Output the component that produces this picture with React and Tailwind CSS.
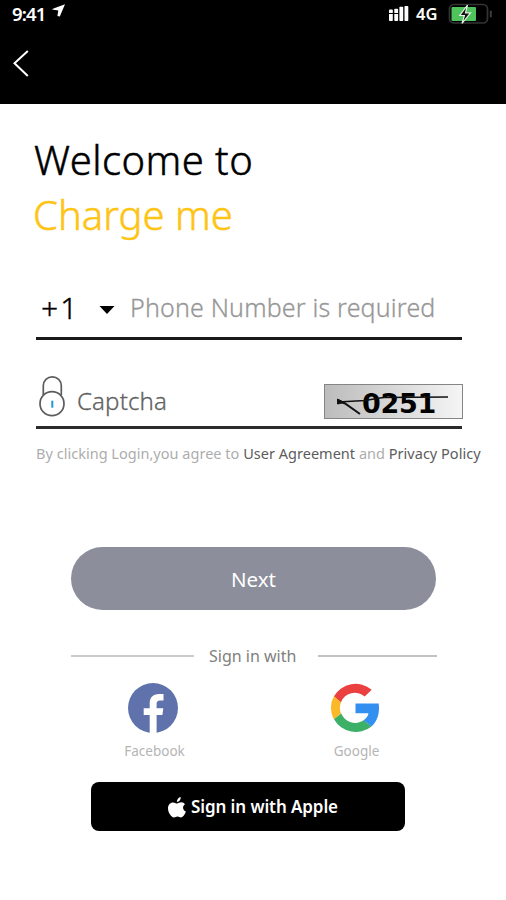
import { useState } from "react";

const SIGNAL_BARS = [
    { x: 0, top: 3.5 },
    { x: 5.3, top: 2.7 },
    { x: 10.4, top: 0.8 },
    { x: 15.5, top: 0 },
];

/**
 * StatusBar Component
 * Clock, signal strength and battery
 */
const StatusBar = () => (
    <div className="flex h-7 items-center justify-between pl-3 pr-[13px] text-white">
        <div className="flex items-center">
            <span className="text-[18.5px] font-semibold leading-7 tracking-[-0.8px]">9:41</span>
            <svg className="mb-2 ml-1.5 h-[13px] w-[13px]" viewBox="0 0 13 13" fill="currentColor">
                <path d="M13 .2 7.8 12.600 5.400 12 6.300 6.600 0 5.600 1.500 4.500Z" />
            </svg>
        </div>
        <div className="flex items-center">
            <svg className="h-4 w-5" viewBox="0 0 20 16" fill="currentColor">
                {SIGNAL_BARS.map(({ x, top }) => (
                    <rect key={x} x={x} y={top} width="3.8" height={15 - top} rx=".8" />
                ))}
                <path d="M0 7.500h9.500" stroke="#000" strokeWidth="1" />
            </svg>
            <span className="ml-[7px] w-[22px] whitespace-nowrap text-[16.5px] font-semibold leading-7">4G</span>
            <svg className="ml-2.5 h-[22px] w-[45px]" viewBox="0 0 45 22" fill="none">
                <rect x="1.500" y="1.500" width="38" height="18.500" rx="4.500" stroke="#343434" strokeWidth="1.700" />
                <path d="M42.800 8.500v5" stroke="#3c3c3c" strokeWidth="2" strokeLinecap="round" />
                <rect x="3.500" y="4" width="24.500" height="14" rx="1" fill="#4fc45c" />
                <path d="M19.500 2 11.800 12.500h4.600L14 20.500l8.500-10.700h-5Z" fill="#111" stroke="#e5f5e6" strokeWidth="1.200" />
            </svg>
        </div>
    </div>
);

const LockIcon = () => (
    <svg className="h-[42px] w-[26px]" viewBox="0 0 26 42" fill="none" stroke="#5c5c5c" strokeWidth="1.7">
        <path d="M4.300 20V10.800a9 9 0 0 1 18 0V20" />
        <circle cx="13" cy="28.700" r="12" fill="#fff" />
        <path d="M13.300 25.700v7" stroke="#2196dc" strokeWidth="2" />
    </svg>
);

const CaptchaImage = () => (
    <div className="relative flex h-[35px] w-[139px] items-center border border-[#858585] bg-linear-to-r from-[#bcbcbc] to-[#f5f5f5]">
        <span className="ml-[37px] mt-1 font-['DejaVu_Sans',sans-serif] text-[27px] font-bold leading-none tracking-[-0.3px] text-black">
            0251
        </span>
        <svg className="absolute left-0 top-0 h-[33px] w-[137px]" viewBox="0 0 137 33" fill="none" stroke="#111">
            <path d="M13 17 40 15.500 58 12.500 123 12" strokeWidth="1.5" />
            <path d="M13 15.500 20 18.500 35 29" strokeWidth="2" />
            <path d="M12.500 14v5l7-1.500Z" fill="#111" />
        </svg>
    </div>
);

const FacebookIcon = () => (
    <svg className="h-[50px] w-[50px]" viewBox="0 0 50 50">
        <circle cx="25" cy="25" r="25" fill="#6072ab" />
        <path
            d="M21.700 50V32H15.700V25.300H21.700V20.500C21.700 14.500 25 11 31 11H35.500V17.400H32C29.500 17.400 28.600 18.700 28.600 20.800V25.300H35.300L34.400 32H28.600V50Z"
            fill="#fff"
        />
    </svg>
);

const GoogleIcon = () => (
    <svg className="h-[50px] w-[50px]" viewBox="0 0 50 50">
        <path d="M3.800 13.500A25 25 0 0 1 41.700 6.700L34.700 13.500A15 15 0 0 0 10.800 19.500Z" fill="#ea4040" />
        <path d="M4 13A25 25 0 0 0 4 36.500L11 30.500A15 15 0 0 1 11 19.200Z" fill="#fbb829" />
        <path d="M4 36.300A25 25 0 0 0 41.500 43.500L33.700 37.200A15 15 0 0 1 11.200 30.500Z" fill="#3db067" />
        <path d="M25.500 20.500H48.700C50 30 47.500 38 41.400 43.600L33.500 37.300C36.500 35.200 38 33 38.500 30.200H25.500Z" fill="#3490f0" />
    </svg>
);

const AppleIcon = () => (
    <svg className="h-[21px] w-[18px]" viewBox="0 0 18 21" fill="currentColor">
        <path d="M12.700 0C12.900 2.800 11.200 4.700 8.900 4.900 8.700 2.500 10.600.4 12.700 0Z" />
        <path d="M17 7.300C14.100 9.100 14.500 13.200 17.900 14.600 17 17.300 15 20.400 12.900 20.400 11.600 20.400 11.100 19.600 9.500 19.600S7.300 20.400 6 20.400C3.100 20.400 0 15.400 0 11.300 0 7.600 2.300 5.400 5 5.400 6.700 5.400 8 6.500 9.100 6.500 10.200 6.500 11.500 5.300 13.400 5.300 14.900 5.300 16.200 6.100 17 7.300Z" />
    </svg>
);

const SocialButton = ({ label, icon, className = "" }) => (
    <button type="button" className={`flex w-[70px] flex-col items-center ${className}`}>
        {icon}
        <span className="mt-2 pl-[3px] text-[13.5px] leading-5 text-[#b5b5b5]">{label}</span>
    </button>
);

export default function App() {
    const [phone, setPhone] = useState("");
    const [captcha, setCaptcha] = useState("");

    return (
        <div className="h-[900px] w-[506px] overflow-hidden bg-white font-['Noto_Sans',sans-serif]">
            <header className="h-[104px] bg-black">
                <StatusBar />
                <button type="button" className="ml-[13px] mt-[22px] block text-white">
                    <svg className="h-[27px] w-4" viewBox="0 0 16 27" fill="none" stroke="currentColor" strokeWidth="2">
                        <path d="M14.800 1 1.500 13.300 14.800 26" />
                    </svg>
                </button>
            </header>

            <main className="flex flex-col pt-7">
                {/* A hairline stroke puts the light cut between light and regular */}
                <h1 className="pl-[34px] text-[40px] font-light leading-[55px] text-black [-webkit-text-stroke:0.5px]">
                    <span className="block tracking-[0.45px]">Welcome to</span>
                    <span className="-ml-px block text-[#fec413]">Charge me</span>
                </h1>

                {/* Phone number */}
                <div className="ml-9 mt-10 flex h-[58px] w-[426px] items-start border-b-[3px] border-[#1a1a1a]">
                    <button type="button" className="flex items-center pl-[5px] text-black">
                        <span className="w-10 whitespace-nowrap text-left text-[30px] font-light leading-[51px] tracking-[2px] [-webkit-text-stroke:0.4px]">
                            +1
                        </span>
                        <svg className="ml-[18px] mt-1 h-2 w-4" viewBox="0 0 16 8" fill="currentColor">
                            <path d="M.5 0h15L8 8Z" />
                        </svg>
                    </button>
                    <input
                        type="tel"
                        value={phone}
                        onChange={(e) => setPhone(e.target.value)}
                        placeholder="Phone Number is required"
                        className="ml-[15px] h-[50px] w-[330px] text-[25px] font-light tracking-[0.18px] outline-none [-webkit-text-stroke:0.3px] placeholder:text-[#979797]"
                    />
                </div>

                {/* Captcha */}
                <div className="ml-9 mt-8 flex h-[57px] w-[426px] items-start border-b-[3px] border-[#2b2b2b]">
                    <div className="ml-[3px] mt-[3px]">
                        <LockIcon />
                    </div>
                    <input
                        type="text"
                        value={captcha}
                        onChange={(e) => setCaptcha(e.target.value)}
                        placeholder="Captcha"
                        className="ml-3 h-14 w-[200px] text-[24px] font-light tracking-[0.15px] outline-none [-webkit-text-stroke:0.3px] placeholder:text-[#626262]"
                    />
                    <div className="-mr-px ml-auto mt-3">
                        <CaptchaImage />
                    </div>
                </div>

                <p className="ml-9 mt-3.5 whitespace-nowrap text-[14.5px] leading-5 tracking-[0.02px] text-[#adadad]">
                    By clicking Login,you agree to <a className="text-[#5c5c5c]">User Agreement</a> and{" "}
                    <a className="text-[#5c5c5c]">Privacy Policy</a>
                </p>

                <button
                    type="button"
                    className="ml-[71px] mt-[84px] h-[63px] w-[365px] rounded-full bg-[#8c8e9b] pt-0.5 text-[20.5px] text-white"
                >
                    Next
                </button>

                <div className="ml-[71px] mt-[34px] flex h-6 w-[366px] items-center">
                    <span className="h-0.5 w-[123px] bg-[#cacaca]" />
                    <span className="ml-[15px] text-[16px] leading-6 text-[#808080]">Sign in with</span>
                    <span className="ml-auto h-0.5 w-[119px] bg-[#c2c2c2]" />
                </div>

                <div className="mt-[15px] flex">
                    <SocialButton label="Facebook" icon={<FacebookIcon />} className="ml-[118px]" />
                    <SocialButton label="Google" icon={<GoogleIcon />} className="ml-[132px]" />
                </div>

                <button
                    type="button"
                    className="ml-[91px] mt-[21px] flex h-[49px] w-[314px] items-center justify-center gap-[5px] rounded-lg bg-black pl-2.5 pt-px text-white"
                >
                    <AppleIcon />
                    <span className="text-[17px] font-semibold tracking-[-0.1px]">Sign in with Apple</span>
                </button>
            </main>
        </div>
    );
}
